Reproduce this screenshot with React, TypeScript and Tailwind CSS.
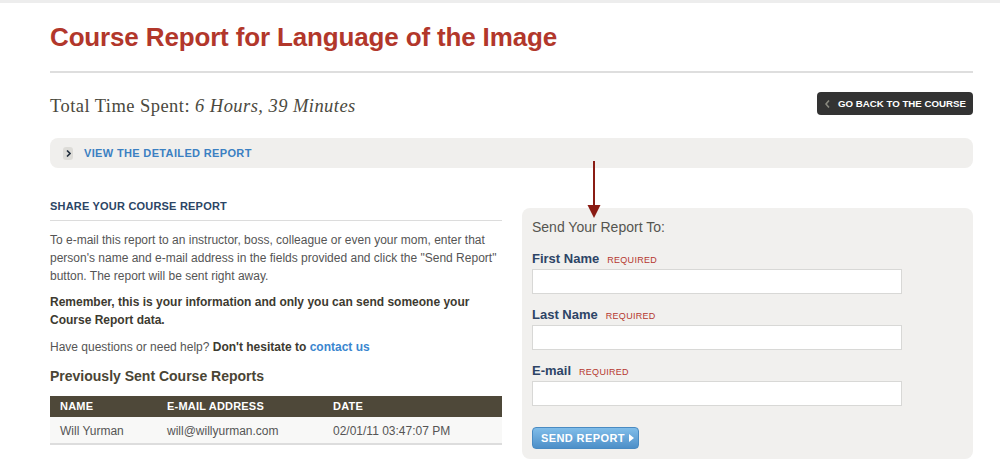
import React from "react";

const fields = ["First Name", "Last Name", "E-mail"];

const App = () => {
    return (
        <div className="relative w-[1000px] h-[473px] overflow-hidden bg-white font-['Liberation_Sans',Arial,sans-serif]">
            <div className="h-[3px] bg-[#ededed]"></div>
            <div className="ml-[50px] w-[923px]">
                <h1 className="mt-[19px] text-[26px] leading-[30px] font-bold tracking-[-0.15px] text-[#b2372b]">
                    Course Report for Language of the Image
                </h1>
                <div className="mt-[19px] h-[2px] bg-[#dedede]"></div>

                <div className="flex justify-between items-start h-[65px]">
                    <p className="mt-[22px] font-['Liberation_Serif',Georgia,serif] text-[18.5px] leading-[22px] tracking-[0.45px] text-[#4b493e]">
                        Total Time Spent: <i>6 Hours, 39 Minutes</i>
                    </p>
                    <button className="mt-[19px] h-[23px] w-[156px] rounded-[4px] bg-[#333333] flex items-center pl-[8px] gap-[8px]">
                        <svg width="5" height="8" viewBox="0 0 5 8">
                            <polyline points="4,0.5 1,4 4,7.5" fill="none" stroke="#8a8a80" strokeWidth="1.6" />
                        </svg>
                        <span className="text-[9.7px] font-bold text-white leading-none">GO BACK TO THE COURSE</span>
                    </button>
                </div>

                <div className="h-[30px] rounded-[8px] bg-[#f0efed] flex items-center pl-[13px]">
                    <div className="w-[10px] h-[13px] rounded-[3px] bg-[#dddcd8] flex items-center justify-center">
                        <svg width="5" height="7" viewBox="0 0 5 7">
                            <polyline points="1,0.5 4,3.5 1,6.5" fill="none" stroke="#23303f" strokeWidth="1.6" />
                        </svg>
                    </div>
                    <span className="ml-[11px] text-[11px] font-bold tracking-[0.35px] text-[#3b80c2] leading-none">VIEW THE DETAILED REPORT</span>
                </div>

                <div className="flex gap-[20px] items-start">
                    {/* left column */}
                    <div className="w-[452px]">
                        <h2 className="mt-[31px] pb-[7px] border-b border-[#dcdcdc] text-[11px] leading-[14px] font-bold tracking-[0.2px] text-[#2b4565]">
                            SHARE YOUR COURSE REPORT
                        </h2>
                        <p className="mt-[10px] text-[12px] leading-[18px] text-[#555555]">
                            To e-mail this report to an instructor, boss, colleague or even your mom, enter that person's name and e-mail address in the fields provided and click the "Send Report" button. The report will be sent right away.
                        </p>
                        <p className="mt-[8px] text-[12px] leading-[18px] font-bold text-[#3d3a30]">
                            Remember, this is your information and only you can send someone your Course Report data.
                        </p>
                        <p className="mt-[9px] text-[12px] leading-[18px] text-[#555555]">
                            Have questions or need help? <b className="text-[#3d3a30]">Don't hesitate to</b>{" "}
                            <a className="font-bold text-[#3a86cf]">contact us</a>
                        </p>
                        <h3 className="mt-[11px] text-[14px] leading-[18px] font-bold text-[#4a4535]">
                            Previously Sent Course Reports
                        </h3>
                        <div className="mt-[11px]">
                            <div className="grid grid-cols-[107px_166px_1fr] h-[21px] items-center bg-[#4e4839] text-[11px] font-bold text-white tracking-[0.2px]">
                                <span className="px-[10px]">NAME</span>
                                <span className="px-[10px]">E-MAIL ADDRESS</span>
                                <span className="px-[10px]">DATE</span>
                            </div>
                            <div className="grid grid-cols-[107px_166px_1fr] h-[28px] items-center pt-[1px] bg-[#f8f8f7] border-b-2 border-[#dddddd] text-[12px] text-[#555555]">
                                <span className="px-[10px]">Will Yurman</span>
                                <span className="px-[10px]">will@willyurman.com</span>
                                <span className="px-[10px]">02/01/11 03:47:07 PM</span>
                            </div>
                        </div>
                    </div>

                    {/* right column */}
                    <div className="w-[451px] mt-[40px] rounded-[8px] bg-[#f1f0ee] px-[10px] pt-[10px] pb-[10px]">
                        <p className="text-[14px] leading-[18px] text-[#555550]">Send Your Report To:</p>
                        {fields.map((field, i) => (
                            <div key={field} className={i === 0 ? "mt-[15px]" : "mt-[13px]"}>
                                <div className="flex items-baseline gap-[8px] h-[16px]">
                                    <span className="text-[13px] leading-[16px] font-bold text-[#2d4466]">{field}</span>
                                    <span className="text-[9px] tracking-[0.3px] text-[#b5382f]">REQUIRED</span>
                                </div>
                                <input
                                    type="text"
                                    className="mt-[2px] block w-[370px] h-[25px] bg-white border border-[#d8d8d6] outline-none"
                                />
                            </div>
                        ))}
                        <button className="mt-[21px] h-[22px] w-[107px] rounded-[4px] border border-[#4a8bc2] bg-gradient-to-b from-[#80bde9] to-[#4d8fc8] flex items-center pl-[8px] gap-[4px]">
                            <span className="text-[11px] font-bold tracking-[0.4px] text-white leading-none">SEND REPORT</span>
                            <svg width="5" height="8" viewBox="0 0 5 8">
                                <polygon points="0,0 5,4 0,8" fill="#ffffff" />
                            </svg>
                        </button>
                    </div>
                </div>
            </div>

            {/* arrow pointing at the form */}
            <svg className="absolute left-[587px] top-[161px]" width="14" height="58" viewBox="0 0 14 58">
                <line x1="7" y1="0" x2="7" y2="46" stroke="#8a1c14" strokeWidth="2" />
                <polygon points="0.5,44 13.5,44 7,57" fill="#8a1c14" />
            </svg>
        </div>
    );
};

export default App;
